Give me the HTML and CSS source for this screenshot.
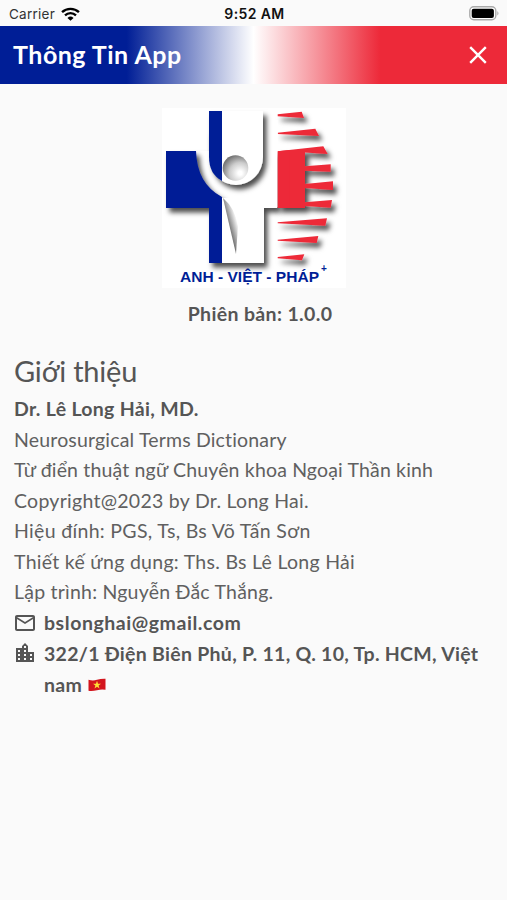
FILE: index.html
```html
<!DOCTYPE html>
<html lang="vi">
<head>
<meta charset="utf-8">
<title>Thông Tin App</title>
<link rel="stylesheet" href="styles.css">
</head>
<body>
<div class="status">
  <div class="carrier"><span>Carrier</span>
    <svg class="wifi" viewBox="0 0 18 13"><path d="M1 4.8a11.5 11.5 0 0 1 16 0M3.8 7.8a7.5 7.5 0 0 1 10.4 0" fill="none" stroke="#000" stroke-width="2.2"/><path d="M6.1 10.2a4.2 4.2 0 0 1 5.8 0L9 13z"/></svg>
  </div>
  <div class="time">9:52 AM</div>
  <div class="power"><svg class="battery" viewBox="0 0 31 15"><rect x=".8" y=".8" width="26" height="13" rx="4" fill="#fff" stroke="#aaa" stroke-width="1.4"/><rect x="2.7" y="2.7" width="22.2" height="9.2" rx="2"/><path d="M28.3 5q2.4 2.3 0 4.6z" fill="#aaa"/></svg></div>
</div>
<header class="bar">
  <h1 class="title">Thông Tin App</h1>
  <svg class="close" viewBox="0 0 18 18"><path d="M1.2 1.2l15.6 15.6M16.8 1.2L1.2 16.8" stroke="#fff" stroke-width="2.4"/></svg>
</header>
<main class="content">
  <svg class="logo" viewBox="162 108 184 180">
    <defs>
      <filter id="sh" x="-30%" y="-30%" width="170%" height="170%"><feDropShadow dx="3.5" dy="4.5" stdDeviation="2.8" flood-opacity=".7"/></filter>
      <radialGradient id="ball" cx=".68" cy=".7" r=".75"><stop offset=".1" stop-color="#fff"/><stop offset=".55" stop-color="#ccc"/><stop offset="1" stop-color="#6e6e6e"/></radialGradient>
      <linearGradient id="leg" gradientUnits="userSpaceOnUse" x1="229" y1="226" x2="238" y2="223.500"><stop offset="0" stop-color="#777"/><stop offset="1" stop-color="#fff"/></linearGradient>
      <clipPath id="cross"><path d="M166 151h43v-40h54v40h14v57h-13v55h-55v-55h-43z"/></clipPath>
    </defs>
    <path fill="#fff" d="M162 108h184v180H162z"/>
    <g filter="url(#sh)">
      <path fill="#ed2939" d="M277.7 114.3l24-2.6 2.3 6.3-26.3-1.7zM277.7 132.7l37.6-4L319 136l-41.3-2zM277.7 151.3l45.6-5 4.4 7.7-22.7-1.5v13.8l25.7-2v7.4l-25.7-1V184l28-2.7v8.7l-28-2v14.3l27-2.3-1.3 7.7L305 206v2h-27.3zM277.7 222.3l49.3-4-1.7 7.4-47.6-2.4zM277.7 239.7l40.6-3.7-1.6 7-39-2.3zM277.7 257l26.6-2.7-2.3 6-24.3-2z"/>
    </g>
    <path filter="url(#sh)" fill="#fff" d="M166 151h43v-20h54v20h14v57h-13v55h-55v-55h-43z"/>
    <path fill="#fff" d="M263 120h14.700v87.500H263z"/>
    <path fill="#ed2939" d="M277.7 151.3l12-1.3v58h-12z"/>
    <g clip-path="url(#cross)">
      <path filter="url(#sh)" fill="#001e96" d="M166 151h30q1 33 26 46v66H209v-55h-43z"/>
      <path fill="#fff" d="M222 198H263v65h-41z"/>
      <path fill="url(#leg)" d="M223 198q12 10 15 28l-2 28z"/>
    </g>
    <path filter="url(#sh)" fill="#fff" d="M209 111h54v46a27 28 0 0 1-54 0z"/>
    <path fill="#001e96" d="M209 111h13v70q-13-7-13-24z"/>
    <circle cx="235.500" cy="168" r="12.8" fill="url(#ball)"/>
    <text class="brand" x="180" y="281.500" textLength="139">ANH - VIỆT - PHÁP</text>
    <text class="plus" x="321" y="272">+</text>
  </svg>
  <p class="version">Phiên bản: 1.0.0</p>
  <section class="about">
    <h2 class="heading">Giới thiệu</h2>
    <p class="line strong l1">Dr. Lê Long Hải, MD.</p>
    <p class="line l2">Neurosurgical Terms Dictionary</p>
    <p class="line l3">Từ điển thuật ngữ Chuyên khoa Ngoại Thần kinh</p>
    <p class="line l4">Copyright@2023 by Dr. Long Hai.</p>
    <p class="line l5">Hiệu đính: PGS, Ts, Bs Võ Tấn Sơn</p>
    <p class="line l6">Thiết kế ứng dụng: Ths. Bs Lê Long Hải</p>
    <p class="line l7">Lập trình: Nguyễn Đắc Thắng.</p>
    <div class="contact">
      <svg class="icon" viewBox="0 0 24 24"><path d="M22 6c0-1.100-.9-2-2-2H4c-1.100 0-2 .9-2 2v12c0 1.100.9 2 2 2h16c1.100 0 2-.9 2-2V6zm-2 0l-8 5-8-5h16zm0 12H4V8l8 5 8-5v10z"/></svg>
      <p class="line strong mail">bslonghai@gmail.com</p>
    </div>
    <div class="contact">
      <svg class="icon" viewBox="0 0 24 24"><path d="M15 11V5l-3-3-3 3v2H3v14h18V11h-6zm-8 8H5v-2h2v2zm0-4H5v-2h2v2zm0-4H5V9h2v2zm6 8h-2v-2h2v2zm0-4h-2v-2h2v2zm0-4h-2V9h2v2zm0-4h-2V5h2v2zm6 12h-2v-2h2v2zm0-4h-2v-2h2v2z"/></svg>
      <p class="line strong address">322/1 Điện Biên Phủ, P. 11, Q. 10, Tp. HCM, Việt<br>nam <svg class="flag" viewBox="0 0 18 14"><path fill="#d3151d" d="M.5 1.800q4.500 1.200 8.500 0t8.500-1v11q-4-.8-8.500.4t-8.500.6z"/><path fill="#ffdf35" d="M9 2.800l1 2.900h3l-2.400 1.800.9 2.900L9 8.700l-2.500 1.700.9-2.900L5 5.700h3z"/></svg></p>
    </div>
  </section>
</main>
</body>
</html>
```
FILE: styles.css
```css
body{margin:0;background:#fafafa;color:#555;font-family:Lato,sans-serif}
p,h1,h2{margin:0}
.status{height:26px;display:grid;grid-template-columns:1fr auto 1fr;align-items:center;padding:1px 7px 0 9px;box-sizing:border-box;font-family:Inter,sans-serif;font-size:13.5px;color:#111}
.carrier{display:flex;align-items:center;gap:6px;color:#333;letter-spacing:.25px}
.time{font-weight:600;font-size:14px;letter-spacing:.4px}
.power{display:flex;justify-content:flex-end}
.wifi{width:19px;height:14px}
.battery{width:31px;height:15px}
.bar{height:58px;display:flex;align-items:center;justify-content:space-between;padding:0 20px 0 13px;background:linear-gradient(90deg,#001e96 25%,#fff 50%,#ed2939 75%)}
.title{font-size:25px;line-height:56px;height:58px;color:#fff;letter-spacing:.5px}
.close{width:18px;height:18px}
.logo{width:184px;height:180px;display:block;margin:24px auto 0}
.brand{font:bold 15.5px "Liberation Sans",sans-serif;fill:#001e96}
.plus{font:bold 10px "Liberation Sans",sans-serif;fill:#001e96}
.version{text-align:center;font-weight:700;font-size:19.5px;line-height:30px;letter-spacing:.35px;margin-top:11px;padding-left:13px;box-sizing:border-box}
.about{padding:0 14px;margin-top:21px}
.heading{font-weight:400;font-size:29px;line-height:42px;letter-spacing:-.2px;margin-bottom:2px}
.line{font-size:19.5px;line-height:30.5px;color:#606060}
.strong{font-weight:700;color:#555}
.l1{letter-spacing:.3px}
.l2{letter-spacing:.17px}
.l3{letter-spacing:.16px}
.l4{letter-spacing:.27px}
.l5{letter-spacing:.32px}
.l6{letter-spacing:.29px}
.l7{letter-spacing:.22px}
.contact{display:flex;gap:6px}
.icon{width:24px;height:24px;margin:3px 0 0 -1px;flex:none;fill:#555;padding-right:1px}
.mail,.address{white-space:nowrap}
.mail{letter-spacing:.55px}
.address{letter-spacing:.28px;line-height:31px}
.flag{width:18px;height:14px;margin-left:1px}
```
